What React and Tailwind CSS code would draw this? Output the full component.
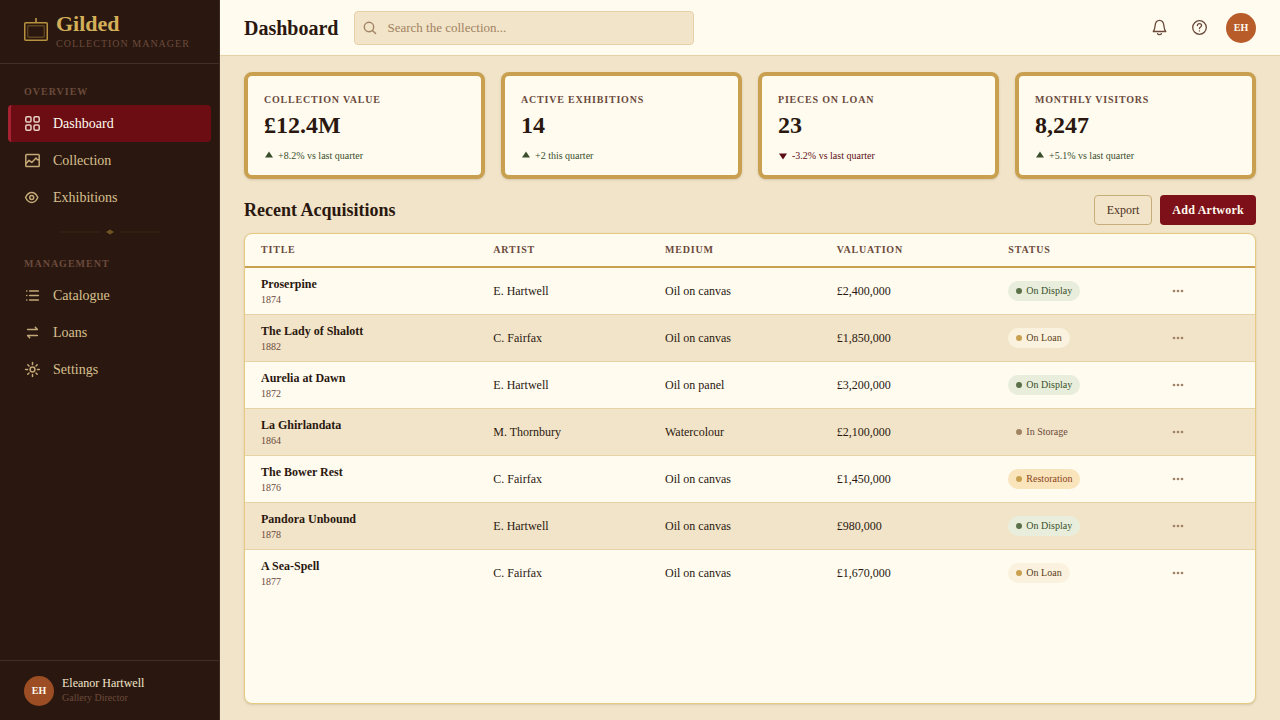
const svgBase = {
  fill: "none",
  stroke: "currentColor",
  strokeLinecap: "round",
  strokeLinejoin: "round",
  "aria-hidden": true,
};

function NavIcon({ children }) {
  return (
    <svg {...svgBase} strokeWidth="1.5" viewBox="0 0 17 17" className="h-[17px] w-[17px] shrink-0">
      {children}
    </svg>
  );
}

const GridIcon = () => (
  <NavIcon>
    <rect x="1.8" y="1.8" width="5.2" height="5.2" rx="1.2" />
    <rect x="10" y="1.8" width="5.2" height="5.2" rx="1.2" />
    <rect x="1.8" y="10" width="5.2" height="5.2" rx="1.2" />
    <rect x="10" y="10" width="5.2" height="5.2" rx="1.2" />
  </NavIcon>
);

const PictureIcon = () => (
  <NavIcon>
    <rect x="1.8" y="2.5" width="13.4" height="12" rx="0.8" />
    <path d="M1.8 11.6 L5 8.4 L7.8 10.4 L12 6 L13.4 7.8 L15.2 7.8" />
  </NavIcon>
);

const EyeIcon = () => (
  <NavIcon>
    <path d="M1.6 8.5 C3.2 5 5.2 3.5 7.7 3.5 C10.2 3.5 12.2 5 13.8 8.5 C12.2 12 10.2 13.5 7.7 13.5 C5.2 13.5 3.2 12 1.6 8.5 Z" />
    <circle cx="7.7" cy="8.5" r="2" />
  </NavIcon>
);

const ListIcon = () => (
  <NavIcon>
    <path d="M5.6 4 H14.4 M5.6 8.5 H14.4 M5.6 13 H14.4" />
    <path d="M2.7 4 H2.8 M2.7 8.5 H2.8 M2.7 13 H2.8" />
  </NavIcon>
);

const SwapIcon = () => (
  <NavIcon>
    <path d="M3.6 5.4 H13.4 L11.3 3.2" />
    <path d="M13.4 11.6 H3.6 L5.7 13.8" />
  </NavIcon>
);

const SunIcon = () => (
  <NavIcon>
    <circle cx="8.5" cy="8.5" r="2.4" />
    <path d="M8.5 1.6 V3.6 M8.5 13.4 V15.4 M1.6 8.5 H3.6 M13.4 8.5 H15.4 M3.8 3.8 L5 5 M12 12 L13.2 13.2 M3.8 13.2 L5 12 M12 5 L13.2 3.8" />
  </NavIcon>
);

function FrameLogo() {
  return (
    <svg viewBox="0 0 24 24" fill="none" className="h-6 w-6 shrink-0" aria-hidden="true">
      <path d="M12 1 V5" stroke="#c9a050" strokeWidth="1.5" />
      <rect x="0.75" y="5.75" width="22.5" height="17.5" rx="1" stroke="#b8913f" strokeWidth="1.5" />
      <rect x="3.75" y="8.75" width="16.5" height="11.5" rx="0.5" stroke="#5e4522" strokeWidth="1.3" />
    </svg>
  );
}

function NavItem({ icon: Icon, label, active }) {
  return (
    <a
      href="#"
      aria-current={active ? "page" : undefined}
      className={
        "mx-2 flex h-[37px] items-center gap-3 rounded border-l-[3px] pl-[13px] text-sm " +
        (active
          ? "border-[#a62232] bg-[#6b0d12] text-[#fffbef] [&>svg]:text-[#e8cfc4]"
          : "border-transparent text-[#d9c08f] [&>svg]:text-[#c4a877]")
      }
    >
      <Icon />
      {label}
    </a>
  );
}

function NavLabel({ children }) {
  return (
    <h2 className="px-6 pb-[7px] text-[10px] font-bold leading-3 tracking-widest text-[#6b4a3c] uppercase">{children}</h2>
  );
}

function Sidebar() {
  return (
    <aside className="flex w-[220px] shrink-0 flex-col border-r border-[#3d2a22] bg-[#2a1810]">
      <div className="flex h-16 shrink-0 items-start gap-2 border-b border-[#432e26] px-6 pt-3">
        <div className="pt-[5px]">
          <FrameLogo />
        </div>
        <div className="whitespace-nowrap">
          <div className="text-[22px] font-bold leading-6 text-[#d4af5a]">Gilded</div>
          <div className="pt-0.5 text-[10px] leading-3 tracking-widest text-[#6b4a3c] uppercase">Collection Manager</div>
        </div>
      </div>
      <nav aria-label="Main" className="flex-1 pt-[22px]">
        <NavLabel>Overview</NavLabel>
        <NavItem icon={GridIcon} label="Dashboard" active />
        <NavItem icon={PictureIcon} label="Collection" />
        <NavItem icon={EyeIcon} label="Exhibitions" />
        <div className="flex justify-center pt-3 pb-[22px]">
          <svg viewBox="0 0 100 8" className="h-2 w-[100px]" aria-hidden="true">
            <path d="M0 4 H40 M60 4 H100" stroke="#332012" strokeWidth="1.4" />
            <path d="M46 4 L50 1.5 L54 4 L50 6.5 Z" fill="#6f5226" />
          </svg>
        </div>
        <NavLabel>Management</NavLabel>
        <NavItem icon={ListIcon} label="Catalogue" />
        <NavItem icon={SwapIcon} label="Loans" />
        <NavItem icon={SunIcon} label="Settings" />
      </nav>
      <div className="flex h-[60px] items-center gap-2 border-t border-[#432e26] px-6">
        <span className="flex h-[30px] w-[30px] items-center justify-center rounded-full bg-[#9c4d23] text-[10px] font-bold text-[#fffbef]">
          EH
        </span>
        <div className="pb-0.5">
          <div className="text-xs leading-4 text-[#f2e4c8]">Eleanor Hartwell</div>
          <div className="pt-px text-[10px] leading-3 text-[#6b4a3c]">Gallery Director</div>
        </div>
      </div>
    </aside>
  );
}

function Header() {
  return (
    <header className="flex h-14 shrink-0 items-center gap-4 border-b border-[#e5d3a5] bg-[#fffbef] px-6">
      <h1 className="text-xl font-bold text-[#2a1810]">Dashboard</h1>
      <label className="flex h-[34px] max-w-[340px] flex-1 items-center gap-[10px] rounded border border-[#e5d3a5] bg-[#f2e4c8] px-2 text-[#a08264]">
        <svg {...svgBase} strokeWidth="1.4" viewBox="0 0 14 14" className="h-[14px] w-[14px] shrink-0">
          <circle cx="6" cy="6" r="4.7" />
          <path d="M9.4 9.4 L12.6 12.6" />
        </svg>
        <input
          type="search"
          aria-label="Search the collection"
          placeholder="Search the collection..."
          className="h-6 min-w-0 flex-1 bg-transparent text-[13px] text-[#2a1810] outline-none placeholder:text-[#a08264]"
        />
      </label>
      <div className="ml-auto flex items-center gap-[10px] text-[#6b4a3c]">
        <button type="button" aria-label="Notifications" className="flex h-[30px] w-[30px] items-center justify-center">
          <svg {...svgBase} strokeWidth="1.4" viewBox="0 0 18 18" className="h-[17px] w-[17px]">
            <path d="M2.4 13.2 H15.6 C14.1 11.8 14 10.3 13.7 7.4 C13.4 3.7 11.7 1.4 9 1.4 C6.3 1.4 4.6 3.7 4.3 7.4 C4 10.3 3.9 11.8 2.4 13.2 Z" />
            <path d="M7 15.6 C7.5 16.8 10.5 16.8 11 15.6" />
          </svg>
        </button>
        <button type="button" aria-label="Help" className="flex h-[30px] w-[30px] items-center justify-center">
          <svg {...svgBase} strokeWidth="1.4" viewBox="0 0 18 18" className="h-[17px] w-[17px]">
            <circle cx="9" cy="9" r="7.2" />
            <path d="M6.8 6.9 C6.8 4.2 11.2 4.2 11.2 6.9 C11.2 8.4 9 8.5 9 10.1 M9 12.5 V12.6" />
          </svg>
        </button>
        <button
          type="button"
          aria-label="Account"
          className="ml-[2px] flex h-[30px] w-[30px] items-center justify-center rounded-full bg-[#b85c2a] text-[10px] font-bold text-[#fffbef]"
        >
          EH
        </button>
      </div>
    </header>
  );
}

const stats = [
  { label: "Collection Value", value: "£12.4M", trend: "+8.2% vs last quarter", up: true },
  { label: "Active Exhibitions", value: "14", trend: "+2 this quarter", up: true },
  { label: "Pieces on Loan", value: "23", trend: "-3.2% vs last quarter", up: false },
  { label: "Monthly Visitors", value: "8,247", trend: "+5.1% vs last quarter", up: true },
];

function StatCard({ label, value, trend, up }) {
  return (
    <div className="rounded-lg border-4 border-[#c9a050] bg-[#fffbef] px-4 pt-4 pb-[11px] shadow-sm">
      <div className="text-[10px] font-bold leading-4 tracking-[0.08em] text-[#6b4a3c] uppercase">{label}</div>
      <div className="pt-px text-2xl font-bold leading-8 text-[#2a1810]">{value}</div>
      <div className={"flex items-center gap-1 pt-[7px] text-[10px] leading-4 " + (up ? "text-[#3a4f2c]" : "text-[#5c0d14]")}>
        <svg viewBox="0 0 10 10" className="h-[10px] w-[10px]" fill="currentColor" aria-hidden="true">
          {up ? <path d="M5 0.5 L9 6.5 H1 Z" /> : <path d="M1 2.5 H9 L5 8.5 Z" />}
        </svg>
        {trend}
      </div>
    </div>
  );
}

const rows = [
  ["Proserpine", "1874", "E. Hartwell", "Oil on canvas", "£2,400,000", "On Display"],
  ["The Lady of Shalott", "1882", "C. Fairfax", "Oil on canvas", "£1,850,000", "On Loan"],
  ["Aurelia at Dawn", "1872", "E. Hartwell", "Oil on panel", "£3,200,000", "On Display"],
  ["La Ghirlandata", "1864", "M. Thornbury", "Watercolour", "£2,100,000", "In Storage"],
  ["The Bower Rest", "1876", "C. Fairfax", "Oil on canvas", "£1,450,000", "Restoration"],
  ["Pandora Unbound", "1878", "E. Hartwell", "Oil on canvas", "£980,000", "On Display"],
  ["A Sea-Spell", "1877", "C. Fairfax", "Oil on canvas", "£1,670,000", "On Loan"],
];

const statusStyles = {
  "On Display": { pill: "bg-[#e8eedb] text-[#3a4f2c]", dot: "bg-[#5a7048]" },
  "On Loan": { pill: "bg-[#faf2de] text-[#5c4018]", dot: "bg-[#c9a050]" },
  "In Storage": { pill: "bg-[#f2e4c8] text-[#6b4a3c]", dot: "bg-[#a08264]" },
  Restoration: { pill: "bg-[#f9e4bc] text-[#8a4520]", dot: "bg-[#c9a050]" },
};

function StatusPill({ status }) {
  const style = statusStyles[status];
  return (
    <span className={"inline-flex h-5 items-center gap-1 rounded-full px-2 text-[10px] " + style.pill}>
      <span className={"h-1.5 w-1.5 rounded-full " + style.dot} />
      {status}
    </span>
  );
}

function AcquisitionsTable() {
  return (
    <div className="flex-1 overflow-hidden rounded-lg border border-[#e5ca80] bg-[#fffbef] shadow-sm">
      <table className="w-full table-fixed text-left text-xs text-[#2a1810]">
        <colgroup>
          <col className="w-[23%]" />
          <col className="w-[17%]" />
          <col className="w-[17%]" />
          <col className="w-[17%]" />
          <col className="w-[16%]" />
          <col className="w-[10%]" />
        </colgroup>
        <thead>
          <tr className="h-[33px] border-b-2 border-[#c9a050] text-[10px] tracking-[0.08em] text-[#6b4a3c] uppercase">
            <th scope="col" className="px-4 font-bold">Title</th>
            <th scope="col" className="px-4 font-bold">Artist</th>
            <th scope="col" className="px-4 font-bold">Medium</th>
            <th scope="col" className="px-4 font-bold">Valuation</th>
            <th scope="col" className="px-4 font-bold">Status</th>
            <th scope="col" className="px-4" aria-label="Actions" />
          </tr>
        </thead>
        <tbody>
          {rows.map(([title, year, artist, medium, valuation, status]) => (
            <tr key={title} className="h-[47px] border-b border-[#e5d3a5] last:border-b-0 even:bg-[#f2e4c8]">
              <td className="px-4">
                <div className="font-bold leading-4">{title}</div>
                <div className="pt-0.5 text-[10px] leading-3 text-[#6b4a3c]">{year}</div>
              </td>
              <td className="px-4">{artist}</td>
              <td className="px-4">{medium}</td>
              <td className="px-4">{valuation}</td>
              <td className="px-4">
                <div className="flex">
                  <StatusPill status={status} />
                </div>
              </td>
              <td className="px-4">
                <button type="button" aria-label={"Actions for " + title} className="flex h-6 w-4 items-center justify-center text-[#a08264]">
                  <svg viewBox="0 0 12 4" className="h-1 w-3" fill="currentColor" aria-hidden="true">
                    <circle cx="2" cy="2" r="1.35" />
                    <circle cx="6" cy="2" r="1.35" />
                    <circle cx="10" cy="2" r="1.35" />
                  </svg>
                </button>
              </td>
            </tr>
          ))}
        </tbody>
      </table>
    </div>
  );
}

export default function App() {
  return (
    <div className='flex min-h-screen bg-[#f2e4c8] font-["Liberation_Serif",serif]'>
      <Sidebar />
      <div className="flex min-w-0 flex-1 flex-col">
        <Header />
        <main className="flex flex-1 flex-col px-6 py-4">
          <section aria-label="Statistics" className="grid grid-cols-4 gap-4">
            {stats.map((s) => (
              <StatCard key={s.label} {...s} />
            ))}
          </section>
          <div className="flex items-center gap-2 pt-4 pb-2">
            <h2 className="mr-auto text-lg font-bold text-[#2a1810]">Recent Acquisitions</h2>
            <button type="button" className="h-[30px] rounded border border-[#c9ad78] px-3 text-xs text-[#4a3022]">
              Export
            </button>
            <button type="button" className="h-[30px] rounded bg-[#7d1018] px-3 text-xs font-bold tracking-[0.02em] text-[#fffbef]">
              Add Artwork
            </button>
          </div>
          <AcquisitionsTable />
        </main>
      </div>
    </div>
  );
}
